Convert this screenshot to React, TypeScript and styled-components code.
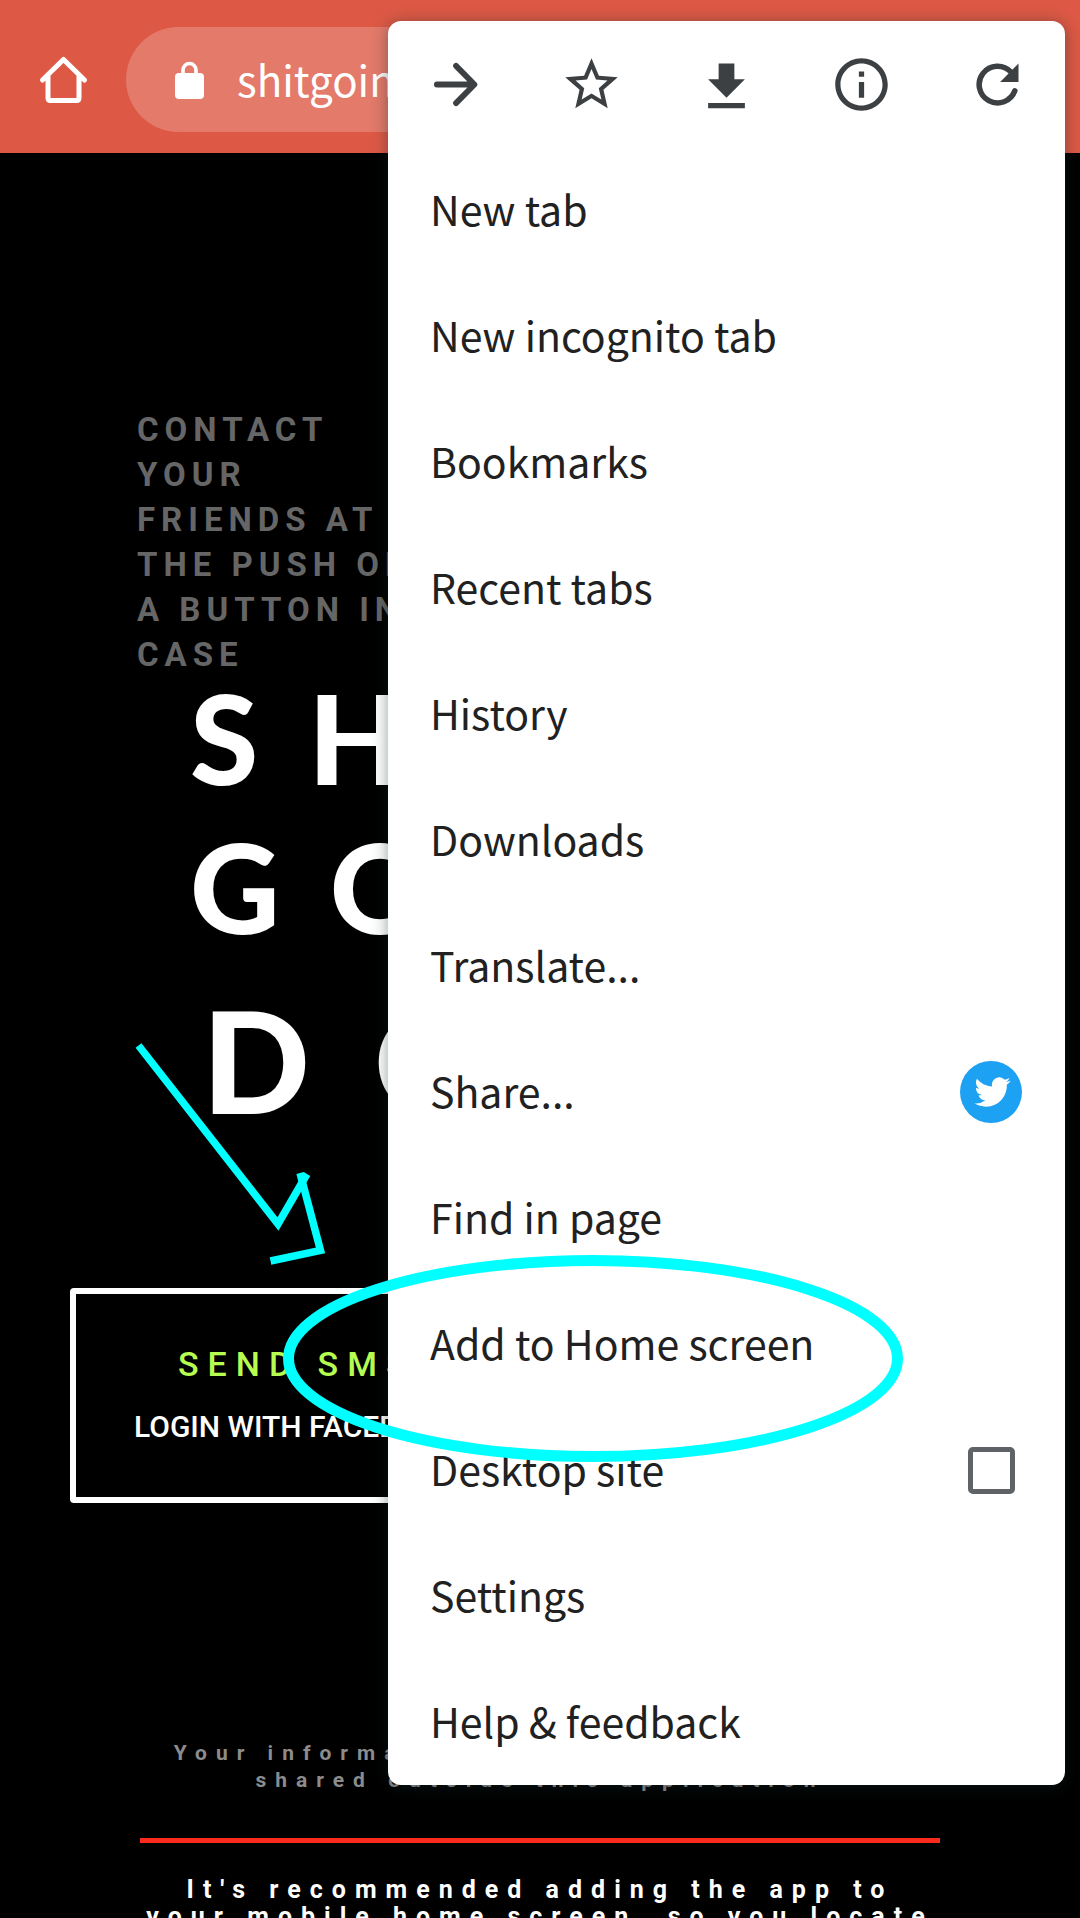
import React from "react";
import styled, { createGlobalStyle } from "styled-components";

const GlobalStyle = createGlobalStyle`
  * { box-sizing: border-box; }
  body { margin: 0; background: #000; }
  button, input { font: inherit; color: inherit; }
`;

const uiFont = `"Noto Sans CJK SC", "Open Sans", sans-serif`;

const Screen = styled.div`
  position: relative;
  height: 100vh;
  overflow: hidden;
  background: #000;
  font-family: Roboto, sans-serif;
`;

const Toolbar = styled.header`
  display: flex;
  align-items: center;
  height: 153px;
  padding: 6px 120px 0 32px;
  background: #dd5945;
  color: #fff;
`;

const IconButton = styled.button`
  display: flex;
  align-items: center;
  justify-content: center;
  padding: 0;
  border: 0;
  background: none;
  cursor: pointer;
`;

const AddressBar = styled.label`
  display: flex;
  flex: 1;
  align-items: center;
  gap: 33px;
  height: 105px;
  margin-left: 32px;
  padding-left: 49px;
  border-radius: 53px;
  background: rgba(255, 255, 255, 0.2);
`;

const AddressInput = styled.input`
  flex: 1;
  min-width: 0;
  padding: 0 0 2px;
  border: 0;
  outline: 0;
  background: none;
  font-family: ${uiFont};
  font-size: 42px;
  line-height: 60px;
`;

const Page = styled.main`
  padding: 254px 70px 0;
  color: #fff;
`;

const Line = styled.span`
  display: block;
  white-space: nowrap;
`;

const Tagline = styled.p`
  margin: 0 67px;
  color: #666;
  font-size: 33px;
  font-weight: 700;
  line-height: 45px;
  letter-spacing: 6px;
`;

const Title = styled.h1`
  display: flex;
  flex-direction: column;
  gap: 29px;
  margin: 0;
  padding-left: 120px;
  font-family: Lato, sans-serif;
  font-size: 124px;
  font-weight: 900;
  line-height: 120px;
  letter-spacing: 50px;
  white-space: nowrap;
`;

const TitleLarge = styled.span`
  padding: 14px 0 0 12px;
  font-size: 142px;
  line-height: 140px;
  letter-spacing: 64px;
`;

const ActionBox = styled.section`
  display: flex;
  flex-direction: column;
  align-items: flex-start;
  gap: 23px;
  margin-top: 159px;
  padding: 48px 58px 52px;
  border: 6px solid #fff;
  border-radius: 4px;
`;

const SendButton = styled.button`
  padding: 0 0 0 44px;
  border: 0;
  background: none;
  color: #b7fc51;
  font-size: 34px;
  font-weight: 500;
  line-height: 44px;
  letter-spacing: 9px;
  white-space: nowrap;
`;

const LoginButton = styled.button`
  padding: 0;
  border: 0;
  background: none;
  font-size: 30px;
  font-weight: 500;
  line-height: 36px;
  white-space: nowrap;
`;

const Privacy = styled.p`
  margin: 237px 0 0;
  color: #8c8c8c;
  font-size: 21px;
  font-weight: 700;
  line-height: 27px;
  letter-spacing: 9px;
  text-align: center;
`;

const Rule = styled.hr`
  height: 5px;
  margin: 44px 70px 33px;
  border: 0;
  background: #fb2c1e;
`;

const Hint = styled.p`
  margin: 0;
  font-size: 25px;
  font-weight: 700;
  line-height: 27px;
  letter-spacing: 9px;
  text-align: center;
`;

const Menu = styled.nav`
  position: absolute;
  top: 21px;
  right: 15px;
  left: 388px;
  border-radius: 13px;
  background: #fff;
  box-shadow: 0 2px 16px rgba(20, 40, 40, 0.45);
  color: #212121;
  font-family: ${uiFont};
  font-size: 41px;
  font-weight: 400;
`;

const MenuIcons = styled.div`
  display: grid;
  grid-template-columns: repeat(5, 1fr);
  height: 126px;
  color: #3c4043;
`;

const MenuList = styled.ul`
  margin: 0;
  padding: 0;
  list-style: none;
`;

const MenuButton = styled.button`
  display: flex;
  align-items: center;
  justify-content: space-between;
  width: 100%;
  height: 126px;
  padding: 0 43px 0 42px;
  border: 0;
  background: none;
  line-height: 60px;
  text-align: left;
`;

const ItemLabel = styled.span`
  padding-bottom: 4px;
`;

const CheckRow = styled(MenuButton).attrs({ as: "label" })`
  padding-right: 50px;
`;

const CheckBox = styled.input`
  appearance: none;
  width: 47px;
  height: 47px;
  margin: 0;
  border: 5px solid #5f6368;
  border-radius: 5px;
`;

const Annotation = styled.svg`
  position: absolute;
  top: 0;
  left: 0;
  pointer-events: none;
`;

const HomeIcon = () => (
  <svg width="62" height="62" viewBox="0 0 62 62" fill="none" stroke="currentColor" strokeWidth="5" strokeLinejoin="round" strokeLinecap="round">
    <path d="M10.500 31 31.500 10.500 52.500 31M16 26V49Q16 51.500 18.500 51.500H44.500Q47 51.500 47 49V26" />
  </svg>
);

const LockIcon = () => (
  <svg width="29" height="38" viewBox="0 0 29 38">
    <rect x="0" y="12" width="29" height="26" rx="4" fill="currentColor" />
    <path d="M8 14V9a6.500 6.500 0 0 1 13 0v5" fill="none" stroke="currentColor" strokeWidth="3.600" />
  </svg>
);

const ForwardIcon = () => (
  <svg width="63" height="63" viewBox="0 0 24 24" fill="none" stroke="currentColor" strokeWidth="2.200" strokeLinecap="round" strokeLinejoin="round">
    <path d="M4.900 12H19M12.200 4.900 19.200 12l-7 7.100" />
  </svg>
);

const StarIcon = () => (
  <svg width="63" height="63" viewBox="0 0 24 24" fill="currentColor">
    <path d="m22 9.240-7.190-.62L12 2 9.190 8.630 2 9.240l5.460 4.730L5.820 21 12 17.270 18.180 21l-1.630-7.030zM12 15.400l-3.760 2.270 1-4.280-3.320-2.880 4.380-.38L12 6.100l1.710 4.040 4.380.38-3.320 2.880 1 4.280z" />
  </svg>
);

const DownloadIcon = () => (
  <svg width="63" height="63" viewBox="0 0 24 24" fill="currentColor">
    <path d="M19 10h-4V4H9v6H5l7 7zM5 19v2h14v-2z" />
  </svg>
);

const InfoIcon = () => (
  <svg width="63" height="63" viewBox="0 0 24 24" fill="currentColor">
    <path d="M11 7h2v2h-2zm0 4h2v6h-2zm1-9C6.480 2 2 6.480 2 12s4.480 10 10 10 10-4.480 10-10S17.520 2 12 2m0 18c-4.410 0-8-3.590-8-8s3.590-8 8-8 8 3.590 8 8-3.590 8-8 8" />
  </svg>
);

const ReloadIcon = () => (
  <svg width="63" height="63" viewBox="0 0 24 24">
    <path d="M18.600 14.400A7 7 0 1 1 17.100 7.200" fill="none" stroke="currentColor" strokeWidth="2.100" strokeLinecap="round" />
    <path d="M20 4v7h-7z" fill="currentColor" />
  </svg>
);

const TwitterIcon = () => (
  <svg width="62" height="62" viewBox="0 0 62 62">
    <circle cx="31" cy="31" r="31" fill="#1da1f2" />
    <path
      transform="translate(14.500 13) scale(1.500)"
      fill="#fff"
      d="M23.950 4.570a10 10 0 0 1-2.820.77 4.960 4.960 0 0 0 2.160-2.720c-.95.550-2 .95-3.130 1.180a4.920 4.920 0 0 0-8.380 4.480C7.690 8.090 4.070 6.130 1.640 3.160a4.820 4.820 0 0 0-.67 2.480c0 1.710.87 3.210 2.190 4.100a4.900 4.900 0 0 1-2.230-.62v.06a4.920 4.920 0 0 0 3.950 4.830 5 5 0 0 1-2.210.08 4.940 4.940 0 0 0 4.600 3.420A9.870 9.870 0 0 1 0 19.540a13.990 13.990 0 0 0 7.550 2.210c9.050 0 14-7.500 14-13.980 0-.21 0-.42-.02-.63a9.940 9.940 0 0 0 2.460-2.550z"
    />
  </svg>
);

const actions = [
  { label: "Forward", Icon: ForwardIcon },
  { label: "Bookmark", Icon: StarIcon },
  { label: "Download", Icon: DownloadIcon },
  { label: "Page info", Icon: InfoIcon },
  { label: "Reload", Icon: ReloadIcon },
];

const items = [
  "New tab",
  "New incognito tab",
  "Bookmarks",
  "Recent tabs",
  "History",
  "Downloads",
  "Translate...",
  "Share...",
  "Find in page",
  "Add to Home screen",
  "Desktop site",
  "Settings",
  "Help & feedback",
];

const tagline = ["CONTACT", "YOUR", "FRIENDS AT", "THE PUSH OF", "A BUTTON IN", "CASE"];

const MenuItem = ({ label }: { label: string }) => {
  if (label === "Desktop site") {
    return (
      <CheckRow htmlFor="desktop-site">
        <ItemLabel>{label}</ItemLabel>
        <CheckBox id="desktop-site" type="checkbox" />
      </CheckRow>
    );
  }
  return (
    <MenuButton type="button">
      <ItemLabel>{label}</ItemLabel>
      {label === "Share..." && <TwitterIcon />}
    </MenuButton>
  );
};

export default function App() {
  return (
    <Screen>
      <GlobalStyle />
      <Toolbar>
        <IconButton type="button" aria-label="Home">
          <HomeIcon />
        </IconButton>
        <AddressBar>
          <LockIcon />
          <AddressInput aria-label="Address" defaultValue="shitgoingdown.com" />
        </AddressBar>
      </Toolbar>

      <Page>
        <Tagline>
          {tagline.map((text) => (
            <Line key={text}>{text}</Line>
          ))}
        </Tagline>
        <Title>
          <span>SHIT</span>
          <span>GOING</span>
          <TitleLarge>DOWN</TitleLarge>
        </Title>
        <ActionBox>
          <SendButton type="button">SEND SMS</SendButton>
          <LoginButton type="button">LOGIN WITH FACEBOOK</LoginButton>
        </ActionBox>
        <Privacy>
          <Line>Your information will never be stored or</Line>
          <Line>shared outside this application</Line>
        </Privacy>
        <Rule />
        <Hint>
          <Line>It's recommended adding the app to</Line>
          <Line>your mobile home screen, so you locate</Line>
        </Hint>
      </Page>

      <Menu aria-label="Browser menu">
        <MenuIcons>
          {actions.map(({ label, Icon }) => (
            <IconButton key={label} type="button" aria-label={label}>
              <Icon />
            </IconButton>
          ))}
        </MenuIcons>
        <MenuList>
          {items.map((label) => (
            <li key={label}>
              <MenuItem label={label} />
            </li>
          ))}
        </MenuList>
      </Menu>

      <Annotation width="920" height="1480" fill="none" stroke="#00ffff" aria-hidden="true">
        <path d="M138.500 1045.500 278 1224 307 1174" strokeWidth="7.500" />
        <path d="M300 1173 320.500 1250.500 270.500 1261" strokeWidth="7.500" />
        <ellipse cx="593" cy="1358.500" rx="304.500" ry="98" strokeWidth="11" />
      </Annotation>
    </Screen>
  );
}
